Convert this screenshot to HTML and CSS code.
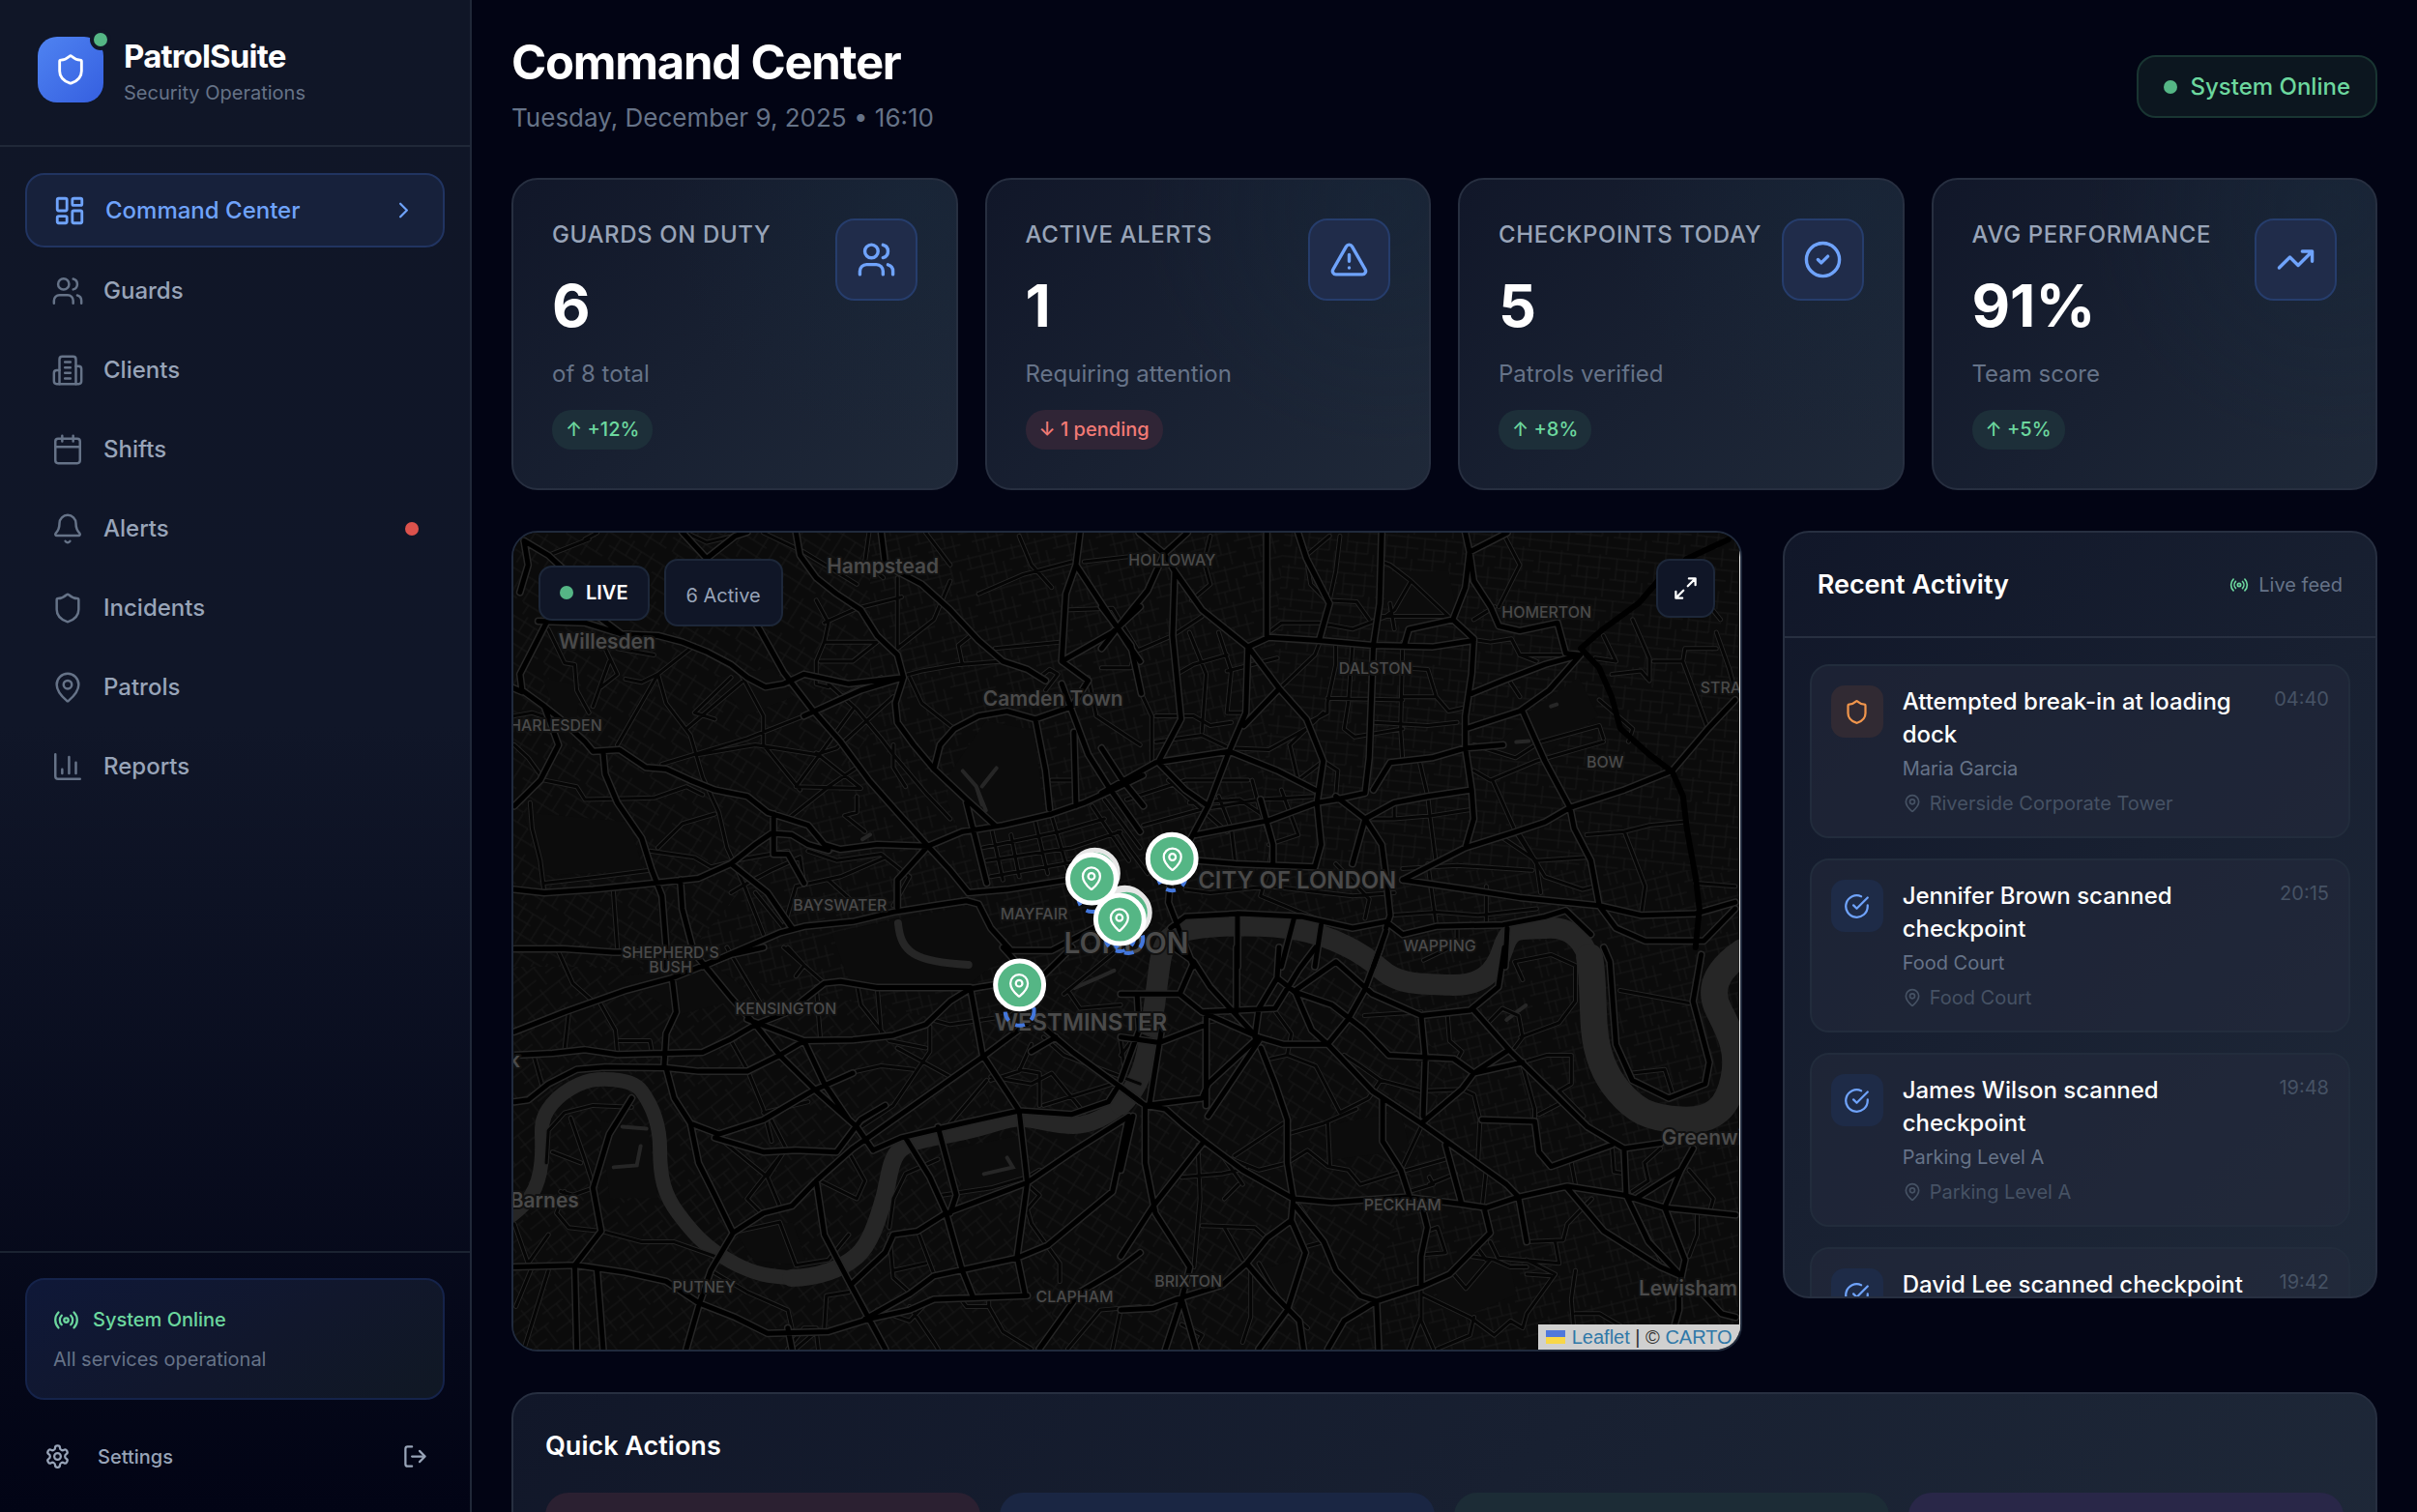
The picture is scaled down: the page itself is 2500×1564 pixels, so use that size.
FILE: index.html
```html
<!DOCTYPE html>
<html lang="en">
<head>
<meta charset="utf-8">
<title>PatrolSuite – Command Center</title>
<meta name="viewport" content="width=device-width, initial-scale=1">
<link rel="stylesheet" href="styles.css">
</head>
<body>
<svg class="sprite" aria-hidden="true">
  <symbol id="i-shield" viewBox="0 0 24 24"><path d="M20 13c0 5-3.5 7.5-7.66 8.95a1 1 0 0 1-.67-.01C7.5 20.5 4 18 4 13V6a1 1 0 0 1 1-1c2 0 4.500-1.200 6.240-2.720a1.170 1.170 0 0 1 1.520 0C14.510 3.810 17 5 19 5a1 1 0 0 1 1 1z"/></symbol>
  <symbol id="i-dash" viewBox="0 0 24 24"><rect x="3" y="3" width="7" height="9" rx="1"/><rect x="14" y="3" width="7" height="5" rx="1"/><rect x="14" y="12" width="7" height="9" rx="1"/><rect x="3" y="16" width="7" height="5" rx="1"/></symbol>
  <symbol id="i-users" viewBox="0 0 24 24"><path d="M16 21v-2a4 4 0 0 0-4-4H6a4 4 0 0 0-4 4v2"/><circle cx="9" cy="7" r="4"/><path d="M22 21v-2a4 4 0 0 0-3-3.870M16 3.130a4 4 0 0 1 0 7.750"/></symbol>
  <symbol id="i-building" viewBox="0 0 24 24"><path d="M6 22V4a2 2 0 0 1 2-2h8a2 2 0 0 1 2 2v18Z"/><path d="M6 12H4a2 2 0 0 0-2 2v6a2 2 0 0 0 2 2h2M18 9h2a2 2 0 0 1 2 2v9a2 2 0 0 1-2 2h-2M10 6h4M10 10h4M10 14h4M10 18h4"/></symbol>
  <symbol id="i-calendar" viewBox="0 0 24 24"><rect x="3" y="4" width="18" height="18" rx="2"/><path d="M8 2v4M16 2v4M3 10h18"/></symbol>
  <symbol id="i-bell" viewBox="0 0 24 24"><path d="M10.270 21a2 2 0 0 0 3.460 0M3.260 15.330A1 1 0 0 0 4 17h16a1 1 0 0 0 .740-1.670C19.410 13.960 18 12.500 18 8A6 6 0 0 0 6 8c0 4.500-1.410 5.960-2.740 7.330"/></symbol>
  <symbol id="i-pin" viewBox="0 0 24 24"><path d="M20 10c0 5-5.540 10.190-7.400 11.800a1 1 0 0 1-1.200 0C9.540 20.190 4 15 4 10a8 8 0 0 1 16 0"/><circle cx="12" cy="10" r="3"/></symbol>
  <symbol id="i-chart" viewBox="0 0 24 24"><path d="M3 3v16a2 2 0 0 0 2 2h16M18 17V9M13 17V5M8 17v-3"/></symbol>
  <symbol id="i-chevron" viewBox="0 0 24 24"><path d="m9 18 6-6-6-6"/></symbol>
  <symbol id="i-radio" viewBox="0 0 24 24"><path d="M4.900 19.100C1 15.200 1 8.800 4.900 4.900M7.800 16.200c-2.300-2.300-2.300-6.100 0-8.500"/><circle cx="12" cy="12" r="2"/><path d="M16.200 7.800c2.300 2.300 2.300 6.100 0 8.500M19.100 4.900C23 8.800 23 15.100 19.100 19"/></symbol>
  <symbol id="i-gear" viewBox="0 0 24 24"><path d="M12.220 2h-.44a2 2 0 0 0-2 2v.18a2 2 0 0 1-1 1.730l-.43.25a2 2 0 0 1-2 0l-.15-.08a2 2 0 0 0-2.730.73l-.22.38a2 2 0 0 0 .73 2.730l.15.1a2 2 0 0 1 1 1.720v.51a2 2 0 0 1-1 1.740l-.15.09a2 2 0 0 0-.73 2.730l.22.38a2 2 0 0 0 2.730.73l.15-.08a2 2 0 0 1 2 0l.43.25a2 2 0 0 1 1 1.730V20a2 2 0 0 0 2 2h.44a2 2 0 0 0 2-2v-.18a2 2 0 0 1 1-1.730l.43-.25a2 2 0 0 1 2 0l.15.08a2 2 0 0 0 2.730-.73l.22-.39a2 2 0 0 0-.73-2.730l-.15-.08a2 2 0 0 1-1-1.740v-.5a2 2 0 0 1 1-1.740l.15-.09a2 2 0 0 0 .73-2.730l-.22-.38a2 2 0 0 0-2.730-.73l-.15.08a2 2 0 0 1-2 0l-.43-.25a2 2 0 0 1-1-1.730V4a2 2 0 0 0-2-2z"/><circle cx="12" cy="12" r="3"/></symbol>
  <symbol id="i-logout" viewBox="0 0 24 24"><path d="M9 21H5a2 2 0 0 1-2-2V5a2 2 0 0 1 2-2h4M16 17l5-5-5-5M21 12H9"/></symbol>
  <symbol id="i-alert" viewBox="0 0 24 24"><path d="m21.730 18-8-14a2 2 0 0 0-3.480 0l-8 14A2 2 0 0 0 4 21h16a2 2 0 0 0 1.730-3M12 9v4M12 17h.01"/></symbol>
  <symbol id="i-check" viewBox="0 0 24 24"><circle cx="12" cy="12" r="10"/><path d="m9 12 2 2 4-4"/></symbol>
  <symbol id="i-trend" viewBox="0 0 24 24"><path d="m22 7-8.500 8.500-5-5L2 17M16 7h6v6"/></symbol>
  <symbol id="i-scanned" viewBox="0 0 24 24"><path d="M22 11.080V12a10 10 0 1 1-5.930-9.140M22 4 12 14.010l-3-3"/></symbol>
  <symbol id="i-expand" viewBox="0 0 24 24"><path d="M15 3h6v6M9 21H3v-6M21 3l-7 7M3 21l7-7"/></symbol>
</svg>

<div class="app">
  <aside class="sidebar">
    <header class="brand">
      <div class="logo"><svg class="icon icon-md"><use href="#i-shield"/></svg><span class="logo-dot"></span></div>
      <div>
        <div class="brand-name">PatrolSuite</div>
        <div class="brand-sub">Security Operations</div>
      </div>
    </header>
    <nav class="nav">
      <a class="nav-item active" href="#command" aria-current="page"><svg class="icon icon-md"><use href="#i-dash"/></svg><span>Command Center</span><svg class="icon icon-sm end"><use href="#i-chevron"/></svg></a>
      <a class="nav-item" href="#guards"><svg class="icon icon-md"><use href="#i-users"/></svg><span>Guards</span></a>
      <a class="nav-item" href="#clients"><svg class="icon icon-md"><use href="#i-building"/></svg><span>Clients</span></a>
      <a class="nav-item" href="#shifts"><svg class="icon icon-md"><use href="#i-calendar"/></svg><span>Shifts</span></a>
      <a class="nav-item" href="#alerts"><svg class="icon icon-md"><use href="#i-bell"/></svg><span>Alerts</span><i class="dot dot-red end"></i></a>
      <a class="nav-item" href="#incidents"><svg class="icon icon-md"><use href="#i-shield"/></svg><span>Incidents</span></a>
      <a class="nav-item" href="#patrols"><svg class="icon icon-md"><use href="#i-pin"/></svg><span>Patrols</span></a>
      <a class="nav-item" href="#reports"><svg class="icon icon-md"><use href="#i-chart"/></svg><span>Reports</span></a>
    </nav>
    <footer class="side-foot">
      <div class="health">
        <div class="health-title"><svg class="icon icon-sm"><use href="#i-radio"/></svg>System Online</div>
        <div class="health-sub">All services operational</div>
      </div>
      <div class="side-actions">
        <button class="side-btn" type="button"><svg class="icon icon-sm"><use href="#i-gear"/></svg>Settings</button>
        <button class="side-btn" type="button" aria-label="Log out"><svg class="icon icon-sm"><use href="#i-logout"/></svg></button>
      </div>
    </footer>
  </aside>

  <main class="main">
    <header class="page-head">
      <div>
        <h1>Command Center</h1>
        <p class="page-date">Tuesday, December 9, 2025 • 16:10</p>
      </div>
      <div class="status"><i class="dot"></i>System Online</div>
    </header>

    <section class="stats">
      <article class="card stat">
        <div class="stat-body"><h2 class="stat-label">GUARDS ON DUTY</h2><div class="stat-value">6</div><div class="stat-note">of 8 total</div><div class="pill">↑ +12%</div></div>
        <div class="stat-icon"><svg class="icon icon-lg"><use href="#i-users"/></svg></div>
      </article>
      <article class="card stat">
        <div class="stat-body"><h2 class="stat-label">ACTIVE ALERTS</h2><div class="stat-value">1</div><div class="stat-note">Requiring attention</div><div class="pill pill-red">↓ 1 pending</div></div>
        <div class="stat-icon"><svg class="icon icon-lg"><use href="#i-alert"/></svg></div>
      </article>
      <article class="card stat">
        <div class="stat-body"><h2 class="stat-label">CHECKPOINTS TODAY</h2><div class="stat-value">5</div><div class="stat-note">Patrols verified</div><div class="pill">↑ +8%</div></div>
        <div class="stat-icon"><svg class="icon icon-lg"><use href="#i-check"/></svg></div>
      </article>
      <article class="card stat">
        <div class="stat-body"><h2 class="stat-label">AVG PERFORMANCE</h2><div class="stat-value">91%</div><div class="stat-note">Team score</div><div class="pill">↑ +5%</div></div>
        <div class="stat-icon"><svg class="icon icon-lg"><use href="#i-trend"/></svg></div>
      </article>
    </section>

    <section class="middle">
      <div class="map">
        <svg class="map-canvas" viewBox="530 549 1271 849" preserveAspectRatio="xMidYMid slice" role="img" aria-label="Map of central London">
          <defs>
            <pattern id="p1" width="46" height="38" patternUnits="userSpaceOnUse" patternTransform="rotate(-14)"><path class="street" d="M0 4H46M0 15H30M12 26H46M5 0V15M17 4V38M30 0V26M39 15V38M24 26V38"/></pattern>
            <pattern id="p2" width="52" height="42" patternUnits="userSpaceOnUse" patternTransform="rotate(32)"><path class="street" d="M0 6H52M0 18H36M8 31H52M7 6V31M20 0V18M32 6V42M44 0V31M14 31V42"/></pattern>
            <pattern id="p3" width="44" height="50" patternUnits="userSpaceOnUse" patternTransform="rotate(-38)"><path class="street" d="M0 5H44M0 17H26M10 28H44M0 40H32M6 5V28M18 17V50M29 0V28M38 28V50"/></pattern>
            <pattern id="p4" width="40" height="44" patternUnits="userSpaceOnUse" patternTransform="rotate(6)"><path class="street" d="M0 3H40M6 14H40M0 25H28M0 36H40M6 3V25M16 14V44M28 0V25M34 25V44"/></pattern>
            <g id="minor">
              <g transform="translate(520 540) scale(.4209 .3333)">
                <path d="M110 330 150 435 175 440 180 520 210 590M250 390 280 470 240 510M260 430 220 570M380 470 280 690M370 410 280 390M300 485 340 495 380 470 470 380M380 470 400 560 460 660 490 790 530 900 550 1010 590 1120 640 1280M580 460 640 600 640 690 730 830M600 480 450 640M560 480 470 590 520 610M390 750 600 670 740 600 850 530 930 480M480 720 620 690 770 720 820 700 960 540M770 240 800 310 790 370 770 430 770 500 800 510M780 430 860 430 920 370 790 370M790 310 870 265 980 230M800 500 870 580 930 670 960 720 1040 840 1100 920M860 580 720 820M720 820 880 825 770 715M970 480 1030 460 1120 440 1230 430M1130 440 1120 380 1150 350M970 170 970 390 1060 300 1100 180M1000 480 1030 560 1110 640M960 690 960 760 990 820M380 1010 440 935 520 905M360 1020 470 1040 510 1070 590 1045 700 1020M100 1120 240 1100 360 1080M270 1145 280 1320M65 870 70 950 90 1050 100 1150M560 1150 600 1120 660 1080 730 1040M730 1040 740 1120M620 1150 690 1260 720 1130 830 1100 940 1040M750 1020 820 1050 930 1030 1000 1100 960 1190M890 960 840 910 870 900 870 850M700 920 800 820 870 760M800 1110 870 1190M1160 960 1190 1120M1200 940 1230 1110M1250 970 1270 1100M1310 930 1340 1090M1350 910 1390 1080M1180 1010 1370 960 1480 920M1190 1050 1400 1010 1520 960M1200 1100 1380 1060 1460 1040M1450 880 1540 1050M1480 860 1568 1010M1350 800 1400 800M1210 390 1370 370M1380 270 1500 265 1560 390M1430 120 1568 100M1320 480 1345 455 1365 470 1335 520M1440 480 1460 600 1568 690M450 30 500 60 600 30M200 50 230 30M110 100 210 50M640 30 740 90 870 190M900 30 890 120 935 170M1040 30 1100 130M1270 40 1300 130 1350 200M1170 220 1280 160 1400 120M26 600 70 590 140 620M26 690 60 730 100 800 180 820 200 860 370 855 450 820 490 845"/>
              </g>
              <g transform="translate(1140 540) scale(.4337 .3333)">
                <path d="M260 40 245 120 260 190 215 240M0 450 70 450 80 400 170 350 240 290M80 400 95 530 120 600 120 740M180 470 220 440 300 410M130 600 220 600 260 630 310 620M210 340 250 470 240 650M280 340 310 460 300 590M300 460 420 420M305 590 345 590M470 40 490 110 500 190 545 250 525 360 510 410 425 515M490 100 545 40M570 40 560 150 545 240 610 245 640 300M400 340 430 310 520 310 600 330 680 290 700 270 740 180 690 130 670 120M740 180 830 290M660 290 830 290M560 370 560 440 540 560 540 590 495 620M600 380 590 560M540 545 720 550M720 370 715 640 720 740M720 450 780 455 800 540 830 585 865 575M720 540 795 540M590 560 580 640 605 665 720 640M450 690 530 590M450 690 470 800 530 740 565 770 560 850M130 680 240 660 305 700 400 705 490 640M690 250 700 330M850 620 780 630 650 620M880 360 930 370 980 360 1000 410 1040 430M940 260 890 300M960 30 1000 130 950 260M1000 410 1100 410M970 480 1000 540M890 690 990 730 1050 680 1190 630 1200 670M890 770 930 800 1040 740 1200 680M760 740 780 850 785 910 800 1060M700 870 700 920 630 920M700 920 790 910 890 890M800 1060 870 1010M720 1075 850 1065 1030 1080M935 800 990 960 1040 1060 1050 1150M960 980 1040 1050 1160 1040M1160 970 1250 960 1310 940 1390 930M1250 960 1300 1130 1290 1220M1000 970 1060 1100 1150 1140 1180 1130M1200 350 1230 430 1180 420M1220 470 1290 460 1310 490 1310 420 1270 300M1320 430 1390 430 1395 390 1470 390M1390 430 1450 640M1470 340 1500 450 1515 520M1390 250 1400 170 1480 300M1190 550 1270 640 1260 680M1420 1120 1515 1130M60 860 200 800 350 800M100 940 240 890 380 860 510 850M160 800 300 960M210 870 330 860 400 920M40 960 70 1020 110 1090M280 850 310 950 320 1060M360 800 380 900 410 1000 400 1070M430 830 470 970 400 1000M200 1140 260 1150 400 1130 600 1160 700 1150M400 1070 380 1160 530 1240M560 1060 640 1170 630 1230M690 1220 800 1210 900 1220 1040 1200M780 1060 800 1250M920 1130 920 1240M850 1250 850 1310 770 1360"/>
              </g>
              <g transform="translate(520 980) scale(.4209 .3724)">
                <path d="M130 0 170 100 215 145M235 150 275 230 280 295M160 185 150 285M285 260 360 260 365 290M75 305 95 385M190 0 215 10M550 0 640 170M560 260 600 340 640 450 660 540M640 460 750 430M650 460 700 570M530 530 650 640 690 570 600 700M650 640 680 720M600 700 640 745M850 570 890 650 870 700 780 650M880 500 960 440 1050 290 1050 220M920 110 930 240M870 100 880 160 950 260 1040 280M970 280 1100 360M1050 200 1100 215 1250 190 1330 100M1100 490 1190 370M1200 360 1300 380 1350 350 1430 460M1330 440 1500 380M850 350 930 330 1010 340M770 110 780 250M690 0 790 100M720 80 740 50 700 0M120 570 190 600M165 475 200 590 220 660M140 680 170 690 220 670M26 770 60 880 110 800M150 680 130 740 160 780 240 790 340 820 420 820 520 860M105 600 110 510 150 460 220 440 315 445M580 790 680 765 720 885 800 870 850 800M30 1000 70 890M50 1118 110 900M510 900 600 960 700 1010 710 1060M790 1060 795 970 850 960M700 1118 740 1060 770 1060M720 1118 770 1070 775 1118M1070 590 990 630 960 700 950 780M1080 690 1200 670 1290 640 1320 620M950 800 960 920 1000 960M960 900 1040 880M1020 790 1060 910M1290 660 1320 690 1290 730 1300 770 1370 880 1370 930M1130 985 1140 1000 1195 1000 1195 980M1195 1000 1230 1070 1300 1118M1000 1000 1060 1100 1070 1118M920 1010 1000 1040 1050 980M1390 1118 1470 1010 1568 1000M1500 1118 1520 1010M1320 440 1320 350 1270 340M1380 130 1520 0M1390 120 1420 170 1520 160M1330 250 1380 300 1568 380M1200 370 1270 345 1300 270M1520 260 1530 340"/>
              </g>
              <g transform="translate(1160 980) scale(.4209 .3724)">
                <path d="M0 300 40 240 95 265 205 210 250 200M375 170 420 240 410 300 480 330 540 460 610 420 640 370 590 330 550 300M410 300 370 310M410 520 500 490 580 450M510 490 515 610M280 580 400 490M410 600 460 565 510 610 560 620 590 660 690 625 800 590M300 660 250 580 340 620 410 600M150 640 250 630 310 615M190 550 195 700 180 890M200 775 330 780 360 810M255 780 300 870M255 700 290 660M600 190 740 180M640 370 740 400 840 395 870 410 885 480 880 590M805 190 810 260 840 290 830 310M990 330 1020 450 1020 480M1030 465 1090 430M990 320 1050 300 1110 300 1110 380 1080 400 1140 470M1060 390 1090 430M905 210 940 170 980 190 990 250 970 280M985 250 1080 210 1120 150 1120 50 1060 20 970 40 990 90M1210 550 1215 625 1245 630M1330 560 1290 600 1300 650 1260 680M1400 620 1460 700 1450 740M1420 745 1420 800 1400 860M1250 700 1330 870M1000 820 1090 815 1100 770 1160 700M1070 820 1080 880 930 865 910 820M1000 870 1070 910 1000 1020M1000 910 1060 915M920 870 960 890 1000 890M860 860 920 870M740 965 860 1030 920 1080 960 1040 990 1060 1000 1020M870 1030 860 1080 780 1118M740 1030 710 1118M740 945 740 1040 770 1118M820 910 850 950 910 870M755 790 780 780 800 850 750 855M450 835 500 820M440 720 480 790M890 730 900 620M760 640 770 660 710 680M825 630 760 660M1120 900 1110 980 1120 1118M1120 1020 1180 1020 1240 1060M150 1050 200 1080 180 1118M320 900 320 1030 300 1100M340 880 400 1000 460 1060M1230 120 1400 155M1260 350 1340 340 1360 410M900 870 880 840M1110 600 1120 660M690 620 740 500"/>
              </g>
            </g>
            <g id="major">
              <g transform="translate(520 540) scale(.4209 .3333)">
                <path d="M440 28 500 110 540 170 630 330 690 465 760 580 830 680 900 800 970 900 1045 1005 1100 1080 1145 1150M500 110 570 40 600 28M720 28 730 100 770 170 820 220 880 270 920 350 970 410 985 480 965 560 970 620 1010 690 1060 765 1140 860 1210 940M930 28 940 130 1030 190 1100 270 1170 365 1230 430 1290 455 1335 490M85 305 200 310 290 345 380 350 440 370 500 400 560 440 600 480 645 510 690 500 740 470 850 500 985 480M50 55 60 130 40 215M50 55 110 100 170 170 200 260 290 345M105 310 40 470 45 520 100 570 140 610 200 680 220 710 285 705 350 760 400 765 460 800 520 830 600 850 650 900 700 920 750 940 790 1000 830 1015 920 1000 1045 1005 1130 960 1230 940 1350 905 1430 870 1500 830 1575 785M26 1140 100 1150 220 1140 370 1120 480 1105 560 1060 620 1000 660 965 710 970 750 1000 800 1018M100 570 135 690 90 800 26 880M245 710 250 780 280 870 340 980 365 1080 390 1160 400 1320 400 1380M490 1380 560 1340 680 1275 740 1255 860 1240 960 1210 1060 1190 1140 1175 1170 1185 1200 1260 1250 1330 1350 1330 1500 1230M435 1110 440 1200 465 1320M26 1325 150 1325 270 1335 360 1335M1420 30 1410 130 1385 220 1375 430 1440 490 1400 570 1310 610M1375 430 1500 340 1568 260M1410 130 1540 380 1568 430M1060 765 1075 690 1110 640 1170 600 1240 585 1310 610 1335 770 1345 890M1405 650 1410 880M1375 500 1440 720 1490 820 1568 960M665 905 665 1030 700 1030 740 1120M1045 1005 970 1110 970 1195M1140 870 1190 1120M1145 1150 1240 1140 1390 1110M0 500 45 525M740 600 880 520 985 480M710 1260 650 1150 560 1060"/>
              </g>
              <g transform="translate(1140 540) scale(.4337 .3333)">
                <path d="M205 30 150 95 110 210 60 290 0 390M90 30 150 95 175 150 240 270 350 385 425 515 490 610 530 740 515 870M175 150 170 350 190 610 135 745M0 260 70 380 95 530M395 30 395 350M350 385 400 355 520 365 650 380 790 385 890 365M350 385 345 590 305 710M425 515 340 630M670 30 665 250 650 380 640 730 630 840 560 860 515 870 400 925 225 970M870 30 880 90 890 180 930 260 950 320 1000 335 1090 310 1110 405 1145 410M970 30 880 90 870 200 840 300 735 330 725 375M470 30 490 110 545 250 520 365M840 300 890 360 885 470 870 600 870 700 885 830 890 920 870 1010M1515 550 1450 640 1365 770 1250 830 1120 885 1060 930 980 965 870 1010 720 1110M0 840 130 745 305 710 420 770 510 830M305 710 255 880 210 990 165 1100M515 870 525 1000 510 1070M560 850 630 920 670 1000 680 1100 690 1220 680 1260M630 920 600 1060M720 1110 850 1135 1000 1165 1190 1190 1290 1220 1420 1215 1515 1180M230 1050 320 1060 420 1065 510 1070M165 1260 200 1225 330 1215 480 1225 600 1260 680 1240 720 1280 800 1255 960 1250 1060 1225 1110 1205 1170 1280M1190 1190 1170 1050 1130 950 1120 885 1060 740 1005 580M870 640 1000 585 1070 520 1145 410M885 530 960 490 1060 440 1145 410M630 920 700 870 780 850 885 830M650 830 690 745 790 730 870 700 960 690M325 1215 325 1380M460 1230 430 1380M525 1250 510 1380M680 1270 650 1380M970 1260 965 1380M165 1100 160 1180 220 1380M380 860 410 1000 410 1065M0 700 50 800 100 880M140 750 200 830 255 880M1190 1190 1230 1260 1300 1300 1440 1300 1515 1200"/>
              </g>
              <g transform="translate(520 980) scale(.4209 .3724)">
                <path d="M26 430 60 425 110 380 180 340 250 333 400 335 480 345 600 345 680 300 740 260 860 258 960 245 1040 215 1100 150 1150 115 1230 100M26 300 120 295 200 285 280 298 395 295 490 292 560 255 620 215 700 180 790 100 830 95 920 112 1150 112M395 335 400 240 425 180 415 85M400 335 420 420 460 490 480 600 520 690 565 795M480 30 560 140 620 215 680 300 770 400 870 500 910 565M600 200 740 260 790 380 850 480M460 490 530 520 640 480 760 400 860 350M565 795 510 900 480 1000 450 1118M520 530 640 570 720 565 820 570 880 480 940 440M26 890 180 885 300 905 400 930 480 990 570 1030 650 1075 800 1070 900 1035 1000 1010 1060 980 1290 970M26 235 150 180 300 120 415 85 560 20 640 0M910 565 980 530 1130 490 1270 455 1400 465 1490 430 1515 385 1568 430M990 530 1050 640 1090 740 1130 900 1155 970M770 650 790 800 855 940 940 1118M1070 500 1115 690 1100 740M855 940 940 850 960 800 1020 790 1090 740 1290 655 1400 570 1540 470M1270 455 1290 655 1265 860 1285 970M565 795 640 740 710 720 770 650 860 560 960 480 1180 305 1310 195M1150 115 1180 300 1270 455M1540 470 1500 680 1340 830 1265 865 1060 915 1000 965 890 1035M315 420 260 520 220 670 240 790 175 885 180 1118M230 900 245 1118M1568 850 1510 900 1420 960 1320 1118M1300 195 1400 290 1515 385M1230 0 1310 100 1400 0M1360 250 1300 290M700 1060 710 1118"/>
              </g>
              <g transform="translate(1160 980) scale(.4209 .3724)">
                <path d="M285 0 285 180M0 130 145 130 200 180 340 250 400 270 510 270 560 200 600 120 640 0M145 130 180 40 220 110 335 250M0 250 95 265 210 215M180 40 130 0M200 180 380 170 440 60 480 0M390 0 385 85 430 125 470 230 510 270 620 400 740 490 870 595 950 660 980 695M385 85 340 170 330 250M430 125 520 160 600 230 660 300 820 310 870 350 990 320M430 120 530 40 620 130 740 190 860 175 930 110 945 0M870 175 960 290 1060 400 1150 500 1240 560 1330 545M740 490 840 395 870 350 950 290M345 280 380 380 410 480 410 600 425 700 420 760 455 850M0 390 60 440 200 420 215 380 330 260M215 470 340 260M60 440 110 450 150 490 205 540 300 620 425 700 520 710 700 695 840 715 900 725 980 695 1100 665 1240 690 1340 725 1515 745M205 540 80 720 0 860M30 470 0 620M60 440 60 600 85 740 170 890 150 980 110 1118M150 980 185 1118M210 180 210 440M0 1010 80 1005 150 975 250 940 310 880 360 810 420 760M310 880 370 960 440 1040 450 1118M430 720 500 820 530 900 590 970 630 985 740 945 810 910 910 795 895 725M740 945 740 860 755 780 745 735M410 1010 455 850M410 1010 340 1118M630 985 635 1118M630 985 550 1040 510 1118M1100 670 1190 790 1330 890 1380 915M1240 560 1245 690 1300 820 1380 915M1340 725 1390 870 1375 950 1375 1010 1365 1050M1410 560 1380 620 1340 725M1380 620 1275 695M1430 20 1410 150 1450 320 1440 380 1350 420 1260 370 1220 270 1205 40 1190 0M980 695 1000 820M645 420 645 540 690 620 710 690M740 190 750 310 745 470M890 480 1020 485 1030 570 1060 610 1210 550M800 550 840 715M1430 960 1480 1020 1515 1030M100 230 70 440M40 130 45 230 0 370"/>
              </g>
            </g>
          </defs>
          <rect class="land" x="0" y="0" width="2500" height="1600"/>
          <path fill="url(#p2)" d="M530 549H900V760L700 1000H530Z"/>
          <path fill="url(#p1)" d="M900 549H1330L1300 900 1000 1060 700 1000 900 760Z"/>
          <path fill="url(#p4)" d="M1330 549H1801V900L1300 900Z"/>
          <path fill="url(#p3)" d="M530 1000H700L1000 1060 1100 1399H530Z"/>
          <path fill="url(#p2)" d="M1000 1060 1300 900 1500 1100 1400 1399H1100Z"/>
          <path fill="url(#p1)" d="M1300 900H1801V1399H1400L1500 1100Z"/>
          <path class="park" d="M982 800 1020 745 1070 755 1082 850 1010 900 980 830ZM860 965 1010 935 1045 985 1000 1020 880 1020ZM540 840 650 850 665 900 560 905ZM980 1190 1055 1175 1062 1220 1000 1240ZM1590 730 1635 700 1655 740 1600 780 1540 780ZM620 1160 670 1170 680 1240 630 1240ZM1370 1165 1450 1150 1460 1190 1380 1200ZM1480 1320 1560 1290 1570 1340 1500 1370ZM740 700 800 690 820 720 770 740ZM560 700 600 710 590 780ZM760 1275 820 1265 835 1310 780 1305ZM1290 1320 1350 1300 1340 1350ZM1420 590 1500 590 1510 640 1450 650ZM640 1010 740 1000 780 1030 700 1050Z"/>
          <g class="water">
            <path stroke-width="15" d="M528 1258C545 1245 556 1232 559 1203S555 1165 566 1148 600 1118 617 1117 655 1118 663 1129 682 1160 682 1189 686 1236 701 1256 730 1292 756 1306 795 1321 823 1323"/>
            <path stroke-width="18" d="M818 1323C850 1322 872 1312 886 1300S908 1262 914 1241 920 1199 932 1189 965 1178 1000 1170 1040 1157 1055 1157 1100 1167 1118 1164 1152 1152 1168 1136"/>
            <path stroke-width="22" d="M1160 1143C1176 1128 1183 1108 1187 1090S1196 1030 1200 1000 1212 965 1235 961 1310 955 1345 962 1410 985 1429 1002 1470 1018 1501 1019 1548 1008 1556 982 1574 962 1600 960 1640 970 1648 1000"/>
            <path stroke-width="28" d="M1646 990C1650 1010 1649 1040 1651 1064S1660 1110 1676 1129 1706 1157 1741 1159 1790 1145 1796 1115 1790 1065 1780 1045 1775 1005 1805 985"/>
            <path stroke-width="8" d="M929 955C932 985 945 995 1002 998"/>
            <path stroke-width="4" d="M996 797 1010 813 1020 838M1031 794 1016 813M1010 813 1016 832M1112 1022 1140 1010 1153 1004M892 868 900 863M643 1166 668 1168M634 1208 658 1206 662 1186M1018 1215 1048 1208 1042 1198M1570 767 1583 766M1606 730 1612 728M1580 1040 1560 1055"/>
          </g>
          <g class="roads">
            <use href="#minor" class="minor-case"/>
            <use href="#minor" class="minor-fill"/>
            <use href="#major" class="major-case"/>
            <use href="#major" class="major-fill"/>
            <path class="motorway" d="M1790 557 1747 577 1717 600 1697 623 1660 650 1637 670 1656 690 1669 720 1678 753 1708 780 1732 798 1743 823 1747 857 1756 907 1760 940 1756 980"/>
          </g>
          <g class="labels">
            <g class="town"><text x="855" y="592">Hampstead</text><text x="577" y="670">Willesden</text><text x="1017" y="729">Camden Town</text><text x="1721" y="1185">Greenwich</text><text x="1697" y="1341">Lewisham</text><text x="598" y="1250" text-anchor="end">Barnes</text><text x="537" y="1104" text-anchor="end">Park</text></g>
            <g class="area"><text x="1168" y="584">HOLLOWAY</text><text x="1555" y="638">HOMERTON</text><text x="1386" y="696">DALSTON</text><text x="1761" y="716">STRATFORD</text><text x="1643" y="794">BOW</text><text x="622" y="755" text-anchor="end">HARLESDEN</text><text x="1035" y="951">MAYFAIR</text><text x="820" y="942">BAYSWATER</text><text x="693" y="991" text-anchor="middle">SHEPHERD'S</text><text x="693" y="1006" text-anchor="middle">BUSH</text><text x="760" y="1049">KENSINGTON</text><text x="1453" y="984">WAPPING</text><text x="695" y="1338">PUTNEY</text><text x="1412" y="1253">PECKHAM</text><text x="1072" y="1348">CLAPHAM</text><text x="1195" y="1332">BRIXTON</text></g>
            <g class="borough"><text x="1240" y="919">CITY OF LONDON</text><text x="1029" y="1066">WESTMINSTER</text></g>
            <text class="city" x="1101" y="986">LONDON</text>
          </g>
          <g class="zones"><circle cx="1055" cy="1046" r="15"/><circle cx="1130" cy="929" r="14"/><circle cx="1213" cy="907" r="14"/><circle cx="1159" cy="969" r="15"/><circle cx="1168" cy="971" r="15"/></g>
          <g class="pins">
            <circle class="pin-back" cx="1133" cy="903" r="24"/>
            <circle class="pin-back amber" cx="1164" cy="942" r="24"/>
            <circle class="pin-back" cx="1166" cy="944" r="24"/>
            <g><circle cx="1213" cy="888" r="25"/><use href="#i-pin" x="1200" y="875" width="27" height="27"/></g>
            <g><circle cx="1130" cy="909" r="25"/><use href="#i-pin" x="1116" y="895" width="27" height="27"/></g>
            <g><circle cx="1159" cy="951" r="25"/><use href="#i-pin" x="1145" y="938" width="27" height="27"/></g>
            <g><circle cx="1055" cy="1019" r="25"/><use href="#i-pin" x="1041" y="1006" width="27" height="27"/></g>
          </g>
        </svg>
        <div class="map-bar">
          <div class="map-chip live"><i class="dot"></i>LIVE</div>
          <div class="map-chip count">6 Active</div>
          <button class="map-chip expand" type="button" aria-label="Expand map"><svg class="icon icon-sm"><use href="#i-expand"/></svg></button>
        </div>
        <div class="credit"><svg class="flag" viewBox="0 0 20 14"><path fill="#5078dc" d="M0 0h20v7H0z"/><path fill="#f8d748" d="M0 7h20v7H0z"/></svg><a href="#leaflet">Leaflet</a> | © <a href="#carto">CARTO</a></div>
      </div>

      <section class="card activity">
        <header class="activity-head"><h2>Recent Activity</h2><span class="feed"><svg class="icon icon-xs"><use href="#i-radio"/></svg>Live feed</span></header>
        <ul class="events">
          <li class="event">
            <div class="event-icon warn"><svg class="icon icon-sm"><use href="#i-shield"/></svg></div>
            <div class="event-body"><h3>Attempted break-in at loading dock</h3><p>Maria Garcia</p><p class="place"><svg class="icon icon-xs"><use href="#i-pin"/></svg>Riverside Corporate Tower</p></div>
            <time>04:40</time>
          </li>
          <li class="event">
            <div class="event-icon"><svg class="icon icon-sm"><use href="#i-scanned"/></svg></div>
            <div class="event-body"><h3>Jennifer Brown scanned checkpoint</h3><p>Food Court</p><p class="place"><svg class="icon icon-xs"><use href="#i-pin"/></svg>Food Court</p></div>
            <time>20:15</time>
          </li>
          <li class="event">
            <div class="event-icon"><svg class="icon icon-sm"><use href="#i-scanned"/></svg></div>
            <div class="event-body"><h3>James Wilson scanned checkpoint</h3><p>Parking Level A</p><p class="place"><svg class="icon icon-xs"><use href="#i-pin"/></svg>Parking Level A</p></div>
            <time>19:48</time>
          </li>
          <li class="event">
            <div class="event-icon"><svg class="icon icon-sm"><use href="#i-scanned"/></svg></div>
            <div class="event-body"><h3>David Lee scanned checkpoint</h3></div>
            <time>19:42</time>
          </li>
        </ul>
      </section>
    </section>

    <section class="card quick">
      <h2>Quick Actions</h2>
      <div class="quick-grid">
        <button class="tile tile-red" type="button" aria-label="Report incident"></button>
        <button class="tile tile-blue" type="button" aria-label="Add guard"></button>
        <button class="tile tile-green" type="button" aria-label="Create shift"></button>
        <button class="tile tile-violet" type="button" aria-label="View reports"></button>
      </div>
    </section>
  </main>
</div>
</body>
</html>
```
FILE: styles.css
```css
:root {
  --bg: #020414;
  --line: #272f40;
  --text: #ffffff;
  --soft: #98a4b8;
  --muted: #667388;
  --faint: #465264;
  --blue: #6fa3fb;
  --green: #6cd79e;
  --dot: #55b685;
  --red: #f27a75;
}

* { box-sizing: border-box; }

body {
  margin: 0;
  background: var(--bg);
  color: var(--text);
  font-family: Inter, "Liberation Sans", sans-serif;
  font-size: 20px;
  line-height: 28px;
}

h1, h2, h3, p, ul { margin: 0; padding: 0; }
a { color: inherit; text-decoration: none; }
button { font: inherit; color: inherit; background: none; border: 0; padding: 0; }

.sprite { position: absolute; width: 0; height: 0; }

.icon {
  flex: none;
  fill: none;
  stroke: currentColor;
  stroke-width: 2;
  stroke-linecap: round;
  stroke-linejoin: round;
}
.icon-xs { width: 20px; height: 20px; }
.icon-sm { width: 27px; height: 27px; }
.icon-md { width: 34px; height: 34px; }
.icon-lg { width: 41px; height: 41px; }

.dot {
  flex: none;
  width: 14px;
  height: 14px;
  border-radius: 50%;
  background: var(--dot);
}
.dot-red { background: #dc524c; }

.app {
  display: grid;
  grid-template-columns: 488px minmax(0, 1fr);
  height: 100vh;
}

/* Sidebar */
.sidebar {
  display: flex;
  flex-direction: column;
  min-height: 0;
  background: linear-gradient(180deg, #101627 0%, #101628 48%, #020415 100%);
  border-right: 2px solid #202838;
}
.brand {
  display: flex;
  gap: 21px;
  padding: 38px 39px 40px;
  border-bottom: 2px solid #202838;
}
.logo {
  position: relative;
  display: flex;
  align-items: center;
  justify-content: center;
  width: 68px;
  height: 68px;
  border-radius: 20px;
  background: linear-gradient(135deg, #4f83f1, #355fe0);
}
.logo-dot {
  position: absolute;
  top: -8px;
  right: -8px;
  width: 22px;
  height: 22px;
  border: 4px solid #101627;
  border-radius: 50%;
  background: var(--dot);
}
.brand-name {
  font-size: 33px;
  font-weight: 700;
  line-height: 40px;
  letter-spacing: -0.025em;
}
.brand-sub { margin-top: 4px; color: var(--muted); }

.nav {
  display: flex;
  flex: 1;
  flex-direction: column;
  gap: 7px;
  padding: 27px 26px;
}
.nav-item {
  display: flex;
  align-items: center;
  gap: 20px;
  height: 75px;
  padding: 0 27px;
  border-radius: 20px;
  color: var(--soft);
  font-size: 24px;
  font-weight: 500;
}
.nav-item .icon { stroke-width: 1.75; color: var(--muted); }
.nav-item .end { margin-left: auto; }
.nav-item.active {
  height: 77px;
  border: 2px solid #213461;
  background: #17213b;
  color: var(--blue);
}
.nav-item.active .icon { stroke-width: 2; color: var(--blue); }

.side-foot {
  padding: 26px 26px 20px;
  border-top: 2px solid #1b2331;
}
.health {
  padding: 24px 27px 26px;
  border: 2px solid #15234a;
  border-radius: 20px;
  background: linear-gradient(150deg, #0f1838, #11172c 55%, #101824);
}
.health-title {
  display: flex;
  align-items: center;
  gap: 14px;
  color: var(--green);
  font-weight: 500;
  line-height: 34px;
}
.health-sub { margin-top: 10px; color: var(--muted); }
.side-actions {
  display: flex;
  justify-content: space-between;
  margin-top: 21px;
}
.side-btn {
  display: flex;
  align-items: center;
  gap: 28px;
  height: 75px;
  padding: 0 17px 0 20px;
  color: var(--soft);
  font-weight: 500;
}

/* Main column */
.main {
  display: flex;
  flex-direction: column;
  gap: 42px;
  min-width: 0;
  padding: 37px 41px 42px;
  overflow-y: auto;
  scrollbar-width: none;
}
.main > * { flex: none; }
.page-head {
  display: flex;
  align-items: center;
  justify-content: space-between;
}
h1 {
  font-size: 49px;
  font-weight: 700;
  line-height: 56px;
  letter-spacing: -0.025em;
}
.page-date {
  margin-top: 9px;
  color: var(--muted);
  font-size: 26px;
  line-height: 40px;
}
.status {
  display: flex;
  align-items: center;
  gap: 14px;
  height: 65px;
  padding: 0 26px;
  border: 2px solid #193532;
  border-radius: 20px;
  background: #0c161f;
  color: var(--green);
  font-size: 24px;
  font-weight: 500;
}

.card {
  border: 2px solid var(--line);
  border-radius: 27px;
  background: linear-gradient(135deg, #111729, #1f2939);
}

.stats {
  display: grid;
  grid-template-columns: repeat(4, minmax(0, 1fr));
  gap: 28px;
}
.stat {
  display: flex;
  justify-content: space-between;
  padding: 40px;
  background:
    radial-gradient(circle at 90% 8%, rgba(24, 46, 66, 0.3), transparent 50%),
    linear-gradient(135deg, #111729, #1f2939);
}
.stat-body { min-width: 0; }
.stat-label {
  color: var(--soft);
  font-size: 24px;
  font-weight: 500;
  line-height: 34px;
  letter-spacing: 0.025em;
  white-space: nowrap;
}
.stat-value {
  margin-top: 20px;
  font-size: 61px;
  font-weight: 700;
  line-height: 72px;
}
.stat-note {
  margin-top: 18px;
  color: var(--muted);
  font-size: 24px;
  line-height: 34px;
}
.pill {
  width: max-content;
  margin-top: 20px;
  padding: 0 14px;
  border-radius: 20px;
  background: #1d2f39;
  color: var(--green);
  font-weight: 500;
  line-height: 41px;
}
.pill-red { background: #302536; color: var(--red); }
.stat-icon {
  display: flex;
  flex: none;
  align-items: center;
  justify-content: center;
  width: 85px;
  height: 85px;
  border: 2px solid #263d6c;
  border-radius: 20px;
  background: #202c4a;
  color: var(--blue);
}

.middle {
  display: grid;
  grid-template-columns: repeat(3, minmax(0, 1fr));
  gap: 42px;
  align-items: start;
}

/* Map */
.map {
  position: relative;
  grid-column: span 2;
  height: 849px;
  overflow: hidden;
  border: 2px solid #202a3c;
  border-radius: 27px;
  background: #0b0b0b;
}
.map-canvas {
  display: block;
  width: 100%;
  height: 100%;
  border-right: 1px solid #f0f0f0;
}
.land { fill: #0b0b0b; }
.park { fill: #0c0c0c; }
.street { fill: none; stroke: #171717; stroke-width: 1; }
.water { fill: none; stroke: #262626; stroke-linecap: round; }
.roads { fill: none; stroke-linecap: round; stroke-linejoin: round; }
.roads path { vector-effect: non-scaling-stroke; }
#minor path, #major path { vector-effect: non-scaling-stroke; }
.minor-case { stroke: #242424; stroke-width: 5px; }
.minor-fill { stroke: #050505; stroke-width: 3px; }
.major-case { stroke: #262626; stroke-width: 8px; }
.major-fill { stroke: #000000; stroke-width: 5px; }
.motorway { stroke: #000000; stroke-width: 6px; }
.labels {
  fill: #4a4a4a;
  stroke: #111111;
  stroke-width: 4px;
  stroke-linejoin: round;
  paint-order: stroke;
}
.town { font-size: 21px; font-weight: 600; }
.area { font-size: 16px; font-weight: 500; }
.borough { font-size: 24px; font-weight: 600; }
.city { font-size: 30px; font-weight: 600; }
.zones { fill: none; stroke: #4377dd; stroke-width: 4px; stroke-dasharray: 10 8; }
.pins { fill: #55b685; stroke: #ffffff; stroke-width: 5px; }
.pins use { fill: none; stroke-width: 2px; stroke-linecap: round; stroke-linejoin: round; }
.pin-back { stroke: #e6e6e6; }
.amber { fill: #e0a53c; }

.map-bar {
  position: absolute;
  inset: 27px 26px auto;
  display: flex;
  align-items: center;
  gap: 15px;
}
.map-chip {
  display: flex;
  align-items: center;
  justify-content: center;
  border: 2px solid #1d2739;
  border-radius: 14px;
  background: #101627;
}
.live { gap: 13px; height: 57px; padding: 0 20px; font-weight: 600; }
.count { height: 70px; padding: 6px 21px 0; color: var(--soft); }
.expand { align-self: flex-start; width: 61px; height: 61px; margin-left: auto; }
.credit {
  position: absolute;
  right: 0;
  bottom: 0;
  padding: 0 8px;
  background: #d0d0d0;
  color: #333333;
  font-family: "Liberation Sans", Arial, sans-serif;
  font-size: 20px;
  line-height: 26px;
}
.credit a { color: #2f78a8; }
.flag { width: 20px; height: 14px; margin-right: 7px; }

/* Activity feed */
.activity {
  display: flex;
  flex-direction: column;
  height: 794px;
  overflow: hidden;
}
.activity-head {
  display: flex;
  flex: none;
  align-items: center;
  justify-content: space-between;
  height: 109px;
  padding: 0 34px;
  border-bottom: 2px solid var(--line);
}
.activity-head h2, .quick h2 { font-size: 27px; font-weight: 600; line-height: 40px; }
.feed { display: flex; align-items: center; gap: 10px; color: var(--muted); }
.feed .icon { color: var(--green); }
.events {
  display: flex;
  flex-direction: column;
  gap: 21px;
  padding: 27px 26px;
  list-style: none;
}
.event {
  display: flex;
  flex: none;
  gap: 20px;
  padding: 20px;
  border: 2px solid #222c3c;
  border-radius: 20px;
  background: rgba(36, 42, 60, 0.55);
}
.event-icon {
  display: flex;
  flex: none;
  align-items: center;
  justify-content: center;
  width: 54px;
  height: 54px;
  border-radius: 14px;
  background: #1e2b47;
  color: var(--blue);
}
.event-icon.warn { background: #312a33; color: #f0954c; }
.event-body { flex: 1; min-width: 0; }
.event h3 { font-size: 24px; font-weight: 500; line-height: 34px; }
.event p { margin-top: 4px; color: var(--muted); }
.event .place { display: flex; align-items: center; gap: 8px; margin-top: 8px; color: var(--faint); }
.event time { color: var(--faint); }

.quick { padding: 34px 33px; }
.quick-grid {
  display: grid;
  grid-template-columns: repeat(4, minmax(0, 1fr));
  gap: 20px;
  margin-top: 28px;
}
.tile { height: 170px; border-radius: 24px; }
.tile-red { background: #2b2031; }
.tile-blue { background: #1a2643; }
.tile-green { background: #1c2c36; }
.tile-violet { background: #292748; }
```
